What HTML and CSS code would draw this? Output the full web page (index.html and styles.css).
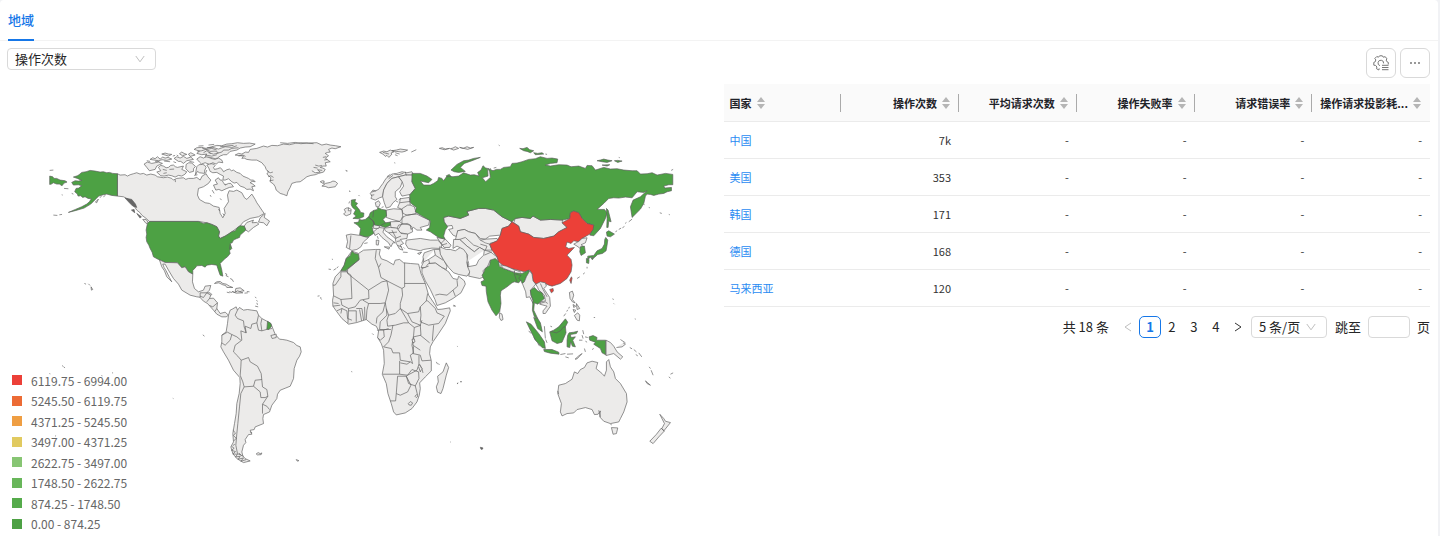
FILE: index.html
```html
<!DOCTYPE html>
<html lang="zh-CN">
<head>
    <meta charset="UTF-8">
    <meta name="viewport" content="width=device-width, initial-scale=1.0">
    <title>地域</title>
    <link rel="stylesheet" href="styles.css">
</head>
<body>
<main class="panel">
    <nav class="tabs">
        <a class="tab active" href="#region">地域</a>
    </nav>

    <div class="content" id="region">
        <section class="chart">
            <div class="select-box metric">
                <select aria-label="指标">
                    <option>操作次数</option>
                </select>
                <svg class="chevron" viewBox="0 0 10 10"><path d="M.8 2 5 7.8 9.2 2"/></svg>
            </div>

            <svg class="map" viewBox="7 70 706 465" role="img" aria-label="世界地图">
                <!-- north america -->
                <g transform="translate(40 130) scale(.33333)">
                    <path d="M232 131 240 135 255 134 262 138 270 134 280 131 290 128 300 132 310 130 320 135 332 132 345 135 352 140 370 143 382 141 395 145 400 150 410 145 430 143 437 148 445 145 460 145 470 142 480 150 486 138 498 131 503 140 512 150 505 160 490 170 475 175 472 195 478 208 495 218 508 220 520 228 537 232 540 250 548 263 555 250 552 235 565 215 562 195 567 182 580 184 590 180 605 188 613 203 620 208 635 192 645 208 650 218 655 225 665 240 672 250 655 260 630 265 610 275 600 287 575 305 555 318 540 325 535 318 538 305 530 290 515 283 500 278 475 274 328 274 318 265 305 255 300 248 290 240 280 225 265 208 250 200 232 198Z"/>
                    <path d="M612 288 620 277 640 270 636 278 650 277 656 282 640 292 625 305 617 300ZM660 263 675 250 672 262 688 273 680 287 670 278 655 276ZM318 268 325 278 318 280 308 268Z"/>
                    <path class="dense" d="M255 204 275 208 286 222 290 232 278 228 268 218ZM274 240 282 238 284 248ZM290 250 304 260 300 264Z"/>
                    <!-- arctic islands -->
                    <path d="M312 102 322 96 335 100 345 98 355 96 367 100 358 104 350 108 345 118 328 122 320 112ZM355 112 362 106 370 108 378 113 385 112 392 106 400 105 406 110 412 112 430 108 425 118 440 125 435 132 425 138 415 136 405 141 395 137 385 135 372 138 362 137 350 126 362 122ZM330 88 338 83 345 86 352 80 360 87 368 81 375 84 384 82 395 87 380 91 366 89 355 92 342 90ZM365 72 375 69 385 72 395 73 385 78 375 75ZM402 85 410 80 420 84 430 79 440 85 452 81 460 88 450 90 440 92 430 100 422 94 415 94ZM445 72 452 68 458 71 465 75 450 79ZM418 71 425 66 432 70 440 73 427 77ZM438 103 446 98 455 99 466 109 460 116 460 124 448 127 437 116Z"/>
                    <path d="M470 87 480 80 490 84 500 79 512 85 524 88 535 84 545 90 548 98 536 96 528 102 518 98 508 103 495 98 484 102 478 96Z"/>
                    <path d="M462 58 470 53 485 52 498 55 515 50 530 46 545 47 560 42 575 41 592 38 610 40 628 39 645 42 636 47 630 50 615 51 600 54 590 60 570 64 560 74 550 74 540 78 532 84 525 86 510 82 495 80 500 72 485 74 470 70 478 63ZM472 64 485 62 497 58 510 64 525 63 535 68M486 54 500 58 515 55 530 60M500 53 518 52 535 57 555 50 575 52 590 47M530 70 545 66 550 60 565 60 575 55 595 53M505 68 520 72 532 70M490 68 500 62 512 70M540 50 560 48 580 46M495 75 515 78 530 74"/>
                    <path class="faint" d="M320 92 330 94M398 78 405 76M410 75 415 78M345 94 358 94M372 93 390 95M400 95 408 98M368 118 380 121M388 118 402 117M370 130 380 128M448 94 462 97M405 148 406 156M462 136 472 134M488 116 494 122M500 120 496 130M516 180 522 190M510 195 513 200M540 205 544 210M552 165 558 162M534 238 540 242M475 48 490 47M505 45 522 43M548 250 552 256"/>
                    <path d="M500 105 508 102 515 101 522 103 525 107 520 112 523 118 532 116 540 113 546 118 550 125 560 119 568 117 574 122 580 120 590 127 600 130 608 138 618 142 625 145 632 150 640 150 645 155 636 154 630 158 638 162 645 168 635 170 640 182 630 177 620 178 612 172 600 168 590 157 582 159 575 155 565 146 555 150 548 150 550 138 540 133 530 127 518 128 510 124 506 114ZM470 110 476 104 488 103 494 106 498 112 494 120 493 130 478 128 472 124 466 134 468 120ZM525 150 535 143 540 150 545 150 550 158 555 165 565 160 572 160 580 170 568 172 558 176 545 182 536 178 527 180 520 165 532 162Z"/>
                    <path class="hi" d="M232 131 218 130 208 127 200 128 190 125 180 126 165 123 150 121 138 125 125 127 117 134 112 137 100 141 112 145 125 151 115 153 105 152 95 157 100 165 115 164 125 167 116 174 108 175 104 185 112 192 114 198 122 197 128 202 135 200 144 205 154 206 148 215 140 222 125 230 106 238 85 247 108 241 132 234 152 222 160 214 168 206 176 198 190 194 200 192 215 196 232 198Z"/>
                    <path class="hi" d="M29 138 38 140 42 145 50 145 60 150 75 152 81 156 72 159 66 167 58 162 50 162 40 158 34 162 29 163Z"/>
                    <path class="hi" d="M328 274H475L490 280 500 278 515 283 530 290 538 305 535 318 540 325 555 318 565 312 575 305 585 302 592 292 600 287 612 288 617 300 608 308 600 315 598 322 588 326 580 330 576 338 570 340 575 355 568 362 570 370 562 380 555 385 540 400 545 420 548 438 540 435 536 424 533 415 530 405 515 403 500 405 495 411 485 406 470 407 465 414 458 420 458 432 445 425 435 410 425 413 412 398 375 397 355 388 340 380 336 366 330 355 326 345 320 335 318 322 320 312 318 300 322 280Z"/>
                    <path d="M358 389 375 397 412 398 425 413 435 410 445 425 458 432 457 455 463 475 475 485 490 480 495 468 512 466 508 480 500 488 510 488 515 493 503 500 495 498 485 502 470 500 450 495 425 480 415 462 400 445 385 420 375 402 368 402 372 412 378 422 388 442 395 455 380 440 373 422 365 410Z"/>
                    <path d="M523 460 530 455 540 454 548 460 558 462 568 468 578 472 560 472 556 466 548 464 536 458ZM587 475 600 473 612 482 604 483 596 486 585 484ZM567 485 576 487M555 430 560 432 558 437 565 440M570 445 576 448 580 455M620 484 628 485M570 342 568 358M145 461 150 466M153 470 158 478 154 480ZM133 460 138 462M40 255 52 256M58 254 66 253M166 216 175 207 170 218ZM180 203 184 198M190 200 196 196M29 121 40 120M65 194 68 195M72 175 85 176M95 190 100 192"/>
                </g>

                <!-- greenland, iceland -->
                <g transform="translate(220 130) scale(.33333)">
                    <path d="M45 75 55 70 65 72 76 66 85 67 90 58 110 55 130 48 142 51 155 46 172 47 190 42 208 44 225 40 240 38 265 39 290 38 305 45 318 42 330 45 346 47 362 50 345 56 335 54 325 58 330 66 322 67 315 70 325 77 316 84 322 90 330 95 315 98 318 108 308 108 300 112 308 114 315 118 310 126 295 130 285 134 272 136 260 140 250 148 240 155 228 156 215 160 210 172 203 185 200 197 190 193 180 190 168 180 165 170 160 162 150 155 152 143 140 132 145 125 138 118 135 110 125 98 110 90 95 90 80 88 72 84 65 85 70 78ZM275 122 285 128 300 126 292 119 306 121M285 105 296 108 305 106M280 112 292 114M140 122 150 128 158 126M144 140 152 137 160 142M148 152 160 150M308 82 318 80M312 90 322 88M180 38 202 40 225 37 242 41 260 39 280 41M55 78 68 75 76 79"/>
                    <path d="M300 155 306 152 312 153 310 158 316 160 330 157 338 153 345 154 352 160 345 170 325 173 315 169 305 168 313 163ZM376 121 380 123M387 183 390 184"/>
                </g>

                <!-- south america -->
                <g transform="translate(200 290) scale(.33333)">
                    <path d="M0 8 20 8 32 15 28 25 40 24 52 38 50 55 60 70 75 66 85 75 78 80 65 80 50 72 40 60 22 40 10 33 0 22ZM20 8 10 22 0 18M28 25 20 35M52 38 38 50 28 46M50 55 44 64"/>
                    <path d="M85 75 90 60 98 56 108 50 112 60 118 52 130 60 142 58 155 60 170 62 175 75 185 85 200 93 212 100 218 115 224 130 218 142 228 136 238 147 248 148 260 150 280 157 290 166 300 170 303 185 298 198 290 210 282 235 280 265 270 288 255 294 240 300 232 312 230 325 215 345 208 365 190 373 188 385 190 400 165 410 162 418 150 420 155 432 145 433 135 448 137 457 130 465 125 485 128 497 135 505 150 512 130 517 110 505 98 490 92 470 100 455 98 430 103 400 108 370 110 340 117 310 120 280 119 262 100 240 85 210 70 185 62 170 65 155 65 135 78 125 82 100Z"/>
                    <path class="border" d="M112 60 105 75 112 85 130 92 132 110 138 128 122 122 125 150 105 165 100 185 113 198 123 210 145 202 150 215 172 228 183 250 185 270 187 290 200 298 203 318 187 342 187 370M138 128 135 108 152 115 155 102 170 98 175 75M170 98 175 120 185 122 202 117 216 115M185 86 182 100 185 122M65 135 82 126 95 133 90 150 75 165 65 158M95 133 110 140 122 150M123 210 122 230 120 255 128 275 132 290 160 288 165 270 185 268M160 288 180 305 182 322 195 322 203 318M187 342 200 348 208 358M132 290 122 310 118 350 113 400 110 430 107 465 112 490 130 498"/>
                    <path class="border" d="M98 420 106 428 100 436 108 444 101 452M94 468 102 474 94 480 106 484 98 491 112 492 106 500 120 498 114 507 130 503 122 513 138 508M104 462 98 466M116 488 124 496"/>
                    <path class="hi" d="M202 93 212 100 214 108 206 118 200 117Z"/>
                    <path d="M168 491 174 487 180 490 185 488 183 493 172 494ZM288 508 296 511 292 513ZM212 136 228 132 228 142 216 145ZM80 6 88 8M96 4 104 7 112 2 120 5 128 8 108 9ZM133 9 143 8M165 20 168 24M169 30 172 34M170 38 172 44M165 48 174 50M8 134 13 138M352 18 358 17M361 25 364 28M150 425 156 428"/>
                </g>

                <!-- europe -->
                <g transform="translate(320 130) scale(.33333)">
                    <path d="M150 190 158 180 166 182 175 178 182 168 188 160 194 150 200 142 208 138 215 132 230 130 245 125 260 128 275 125 280 135 255 135 235 140 215 145 200 160 190 180 187 200 178 203 165 210 152 205 155 198Z"/>
                    <path d="M190 180 200 160 215 145 235 140 246 155 240 172 225 185 225 200 230 208 218 218 210 230 198 234 192 218 187 200Z"/>
                    <path d="M235 140 255 135 278 135 275 155 285 175 270 193 245 198 238 185 250 168 246 155Z"/>
                    <path d="M240 206 267 202 270 225 282 230 288 250 262 256 248 250 245 238 232 232 238 218ZM238 218 270 214M245 236 262 225 270 225M198 240 220 236 245 238 248 262 238 274 215 268 198 262ZM245 262 262 254 290 252 305 260 328 270 325 285 300 292 305 300 290 300 280 292 272 298 270 285 245 280ZM210 275 238 274 245 280 235 296 212 292ZM235 285 262 280 275 290 277 305 262 312 240 308 230 295ZM168 230 165 218 175 212 180 220 176 230ZM184 232 190 230"/>
                    <path d="M78 315 92 312 120 316 145 322 130 335 122 350 110 358 95 361 78 352 82 335ZM92 316 88 356M160 305 175 292 192 294 188 306 200 320 225 338 218 338 212 350 205 338 185 322 175 310 164 316ZM192 350 208 351 206 357ZM168 330 176 331 174 345 168 344ZM171 318 174 326M132 340 142 338"/>
                    <path d="M192 294 210 292 230 294 242 310 262 312 260 325 240 328 250 340 240 345 248 360 238 357 228 340 225 325 205 308 195 302ZM205 308 230 306M225 325 242 318M215 300 228 325M230 334 240 332M232 346 244 350M248 366 262 367M250 352 253 355M262 345 266 350M160 280 178 288 175 295 160 295Z"/>
                    <path d="M258 330 275 328 300 325 330 330 352 330 365 342 362 355 335 354 310 358 300 362 280 358 264 355 256 342ZM292 370 304 366 298 373ZM350 322 375 327 392 345 388 352 372 352 362 340ZM362 340 375 327M365 345 380 340"/>
                    <path d="M72 238 78 234 85 233 93 238 91 252 78 257 70 252 76 246ZM85 233 84 242 92 242"/>
                    <path class="hi" d="M93 210 106 208 104 215 112 220 107 226 118 240 121 247 131 249 130 260 115 266 98 265 108 258 100 252 106 240 97 232 93 224ZM101 278 115 276 117 268 125 270 135 268 145 260 158 272 162 280 156 292 160 310 145 320 134 320 118 314 121 295 112 285ZM145 262 150 248 160 241 172 238 172 232 185 238 197 240 199 258 188 268 196 278 210 276 210 286 195 292 180 287 163 285 158 272Z"/>
                    <path class="border" d="M160 241 158 262M162 285 160 272M180 287 196 278"/>
                    <path d="M178 67 190 63 200 65 210 60 222 65 212 69 215 72 206 82 200 76 195 79 188 72ZM215 62 228 60 240 57 262 60 254 64 245 66 228 64ZM188 67 206 72M225 68 238 72M224 74 232 77M273 66 288 59M357 55 366 53 375 57 388 55 372 59ZM390 56 398 54 405 50 415 55 400 60ZM418 52 428 55 440 50 450 54 460 52 442 58ZM222 98 225 99M78 122 82 123M87 183 90 184M115 195 118 198M88 214 86 220M35 387 38 388M25 417 32 418M40 420 48 415M50 414 54 409M235 210 242 204M228 214 234 216M200 140 210 133M205 146 218 136M222 132 236 134 250 129M255 125 258 136M154 186 168 182M152 196 162 194"/>
                </g>

                <!-- africa, middle east -->
                <g transform="translate(320 240) scale(.33333)">
                    <path d="M95 33 115 40 130 30 165 28 180 28 177 42 183 56 200 62 220 74 225 60 238 58 250 68 270 70 295 72 302 100 315 130 325 165 345 195 352 208 365 207 388 203 390 212 375 250 355 280 338 305 330 320 328 340 333 362 333 392 315 410 298 428 300 445 297 465 290 485 275 505 255 518 228 524 220 515 213 490 203 460 198 430 186 402 192 370 190 330 183 310 172 292 175 272 168 258 155 252 138 238 110 247 85 252 65 235 50 215 38 198 37 180 40 165 38 130 45 110 62 92 72 75 78 55Z"/>
                    <path class="hi" d="M95 33 104 40 115 42 117 58 105 68 92 78 80 88 78 92 62 92 72 75 78 55 90 46Z"/>
                    <path class="border" d="M117 58 105 68 82 88 82 100 145 150 185 125 200 122 182 112 175 82 165 55 168 30M182 70 175 82M200 122 245 145 253 140 253 68M253 130H315M80 92 78 95 62 95 62 110 45 135 38 135M78 95 92 105 95 175 62 178 40 167M145 150 146 175 120 180 105 200 85 205 65 195 62 178M200 122 205 150 195 188 180 190 145 190 128 180M245 145 247 165 240 190 240 205 225 220 205 225 198 205 195 188M240 205 262 220 295 215 300 200 318 182 322 160M240 205 258 235 265 248 250 248 225 255 202 258 200 240 205 225M300 200 302 225 300 245 325 255 355 250 372 228 350 218 345 205 322 182 318 182M145 190 140 210 138 238M195 188 188 215 170 232 168 250M198 205 200 225 180 245 178 268 195 268 212 268M262 220 275 245 300 255 305 240M218 255 212 285 205 305 190 320 213 325 218 338 238 338 240 360 270 365 277 370 270 345 280 338 275 315 280 285 282 262 265 248M300 255 302 285 280 290 278 315 300 330M300 285 328 308M282 262 302 255M340 255 336 302M280 318 278 340 300 345 305 362 332 360M238 362 238 402 188 402M238 402 262 405 290 390 296 372 296 346M270 365 260 372 240 368M296 372 305 385 300 395 295 380M262 405 275 388 295 395 296 415 285 437 265 430 258 408ZM232 408 258 408 272 435 262 455 240 465 228 460 232 408M228 460 226 482 210 482M285 437 292 465M60 195 38 198M40 188 55 190M50 212 65 205 80 212 82 235 95 240M65 205 62 220M85 212 108 212 108 245M85 205 83 250M108 205 125 205 130 240M118 208 124 242M133 200 134 238M170 270 190 270 192 290 180 300 172 292M190 270 205 265"/>
                    <path d="M264 490 270 484 277 488 273 495 266 494ZM284 468 289 463 293 468 288 472ZM275 298 282 296 284 305 278 308ZM298 372 305 385 308 398M378 368 385 382 378 405 368 445 362 460 352 456 348 440 354 425 352 408 368 395Z"/>
                    <path d="M305 80 325 70 345 68 365 82 385 95 398 115 412 118 415 108 432 122 435 132 422 158 398 175 375 188 350 196 344 178 330 148 315 122 305 98Z"/>
                    <path class="border" d="M345 165 358 162 380 165 398 150 412 138 410 120M398 150 405 168M305 85 325 78"/>
                    <path d="M302 82 310 65 308 50 312 38 340 28 358 28 365 50 380 78 378 88 365 82 345 68 325 70 315 82ZM310 65 325 58 345 45 342 30M325 58 328 70M345 45 368 60M304 70 310 55"/>
                    <path d="M358 20 378 28 390 28 405 32 420 22 440 28 440 50 445 70 445 80 450 95 440 108 415 103 400 98 385 82 370 60 360 42Z"/>
                    <path d="M0 172 4 174M398 197 406 198M410 318 412 319M410 430 414 428M420 425 424 424M348 365 352 372M355 370 357 374M93 394 96 395M156 280 160 284"/>
                </g>

                <!-- asia -->
                <g transform="translate(450 140) scale(.33333)">
                    <path d="M-20 232 -5 228 30 235 55 225 50 214 85 205 105 205 130 210 155 230 185 245 175 258 155 265 150 285 118 288 105 297 90 295 75 280 55 275 42 268 22 272 20 290 8 285 -5 268 8 265 5 256 -10 258 -20 248Z"/>
                    <path d="M190 248 195 235 215 232 240 235 248 228 270 240 300 238 337 240 335 248 350 262 325 275 310 288 280 295 250 292 235 282 210 275 205 258Z"/>
                    <path d="M22 272 42 268 55 275 75 280 90 300 105 308 118 312 125 330 102 330 88 322 72 335 50 318 28 298 15 300ZM28 298 45 292 70 315 85 320M90 300 108 297 140 295 145 303 118 310M90 312 110 318 105 330"/>
                    <path d="M10 298 28 298 50 318 72 335 88 322 102 330 120 335 140 350 145 365 120 360 112 378 98 392 102 410 88 415 55 408 58 395 52 380 50 365 52 345 40 328 20 318 8 325ZM50 365 52 380 78 375 85 360 100 345 102 330M102 345 125 335"/>
                    <path class="hi" d="M-115 100-90 100-70 108-55 118-65 128-90 123-80 135-60 135-50 130-38 122-35 112-25 115-20 122-10 108 8 110 25 108 40 98 60 105 72 104 86 108 82 97 92 90 98 77 106 84 112 85 113 108 96 113 106 125 120 112 118 95 113 85 128 92 138 88 150 88 160 82 180 80 185 70 200 69 215 65 235 58 255 56 270 50 290 55 305 54 322 57 320 68 300 70 285 75 300 78 325 74 350 75 362 80 385 78 405 85 410 76 425 77 435 90 460 82 480 87 500 86 520 90 545 92 560 92 570 102 590 101 605 98 620 105 645 100 667 103 667 134 655 134 640 138 643 144 663 142 663 152 650 155 640 160 625 162 610 166 600 163 590 162 585 168 580 190 570 207 545 232 540 200 548 180 570 170 590 152 580 157 560 155 545 173 525 171 505 174 490 173 475 175 460 190 440 208 462 208 470 218 465 235 450 265 430 287 418 285 430 255 410 250 395 235 385 218 370 213 360 218 358 235 337 240 300 238 270 240 248 228 240 235 215 232 195 235 185 245 155 230 130 210 105 205 85 205 50 214 55 225 30 235-5 228-20 232-18 245-8 260-15 270-20 288-16 297-35 292-60 275-72 270-62 262-60 242-90 225-105 215-102 202-120 188-122 165-105 145-115 125Z"/>
                    <path class="hi" d="M2 90 20 73 40 62 55 60 70 55 90 52 65 62 42 70 30 82 45 94 25 97 12 95ZM468 205 473 210 482 245 475 243 473 262 469 262 470 235ZM208 25 218 26 230 22 238 29 250 32 240 38 230 34 220 32ZM250 38 262 40 275 38 280 42 255 44ZM440 62 450 60 460 57 472 60 485 62 470 67 455 65ZM492 62 502 61 515 63 502 67ZM455 75 478 74 470 78ZM-12 107-3 103 2 109-10 110Z"/>
                    <path class="top" d="M185 245 205 258 210 275 235 282 250 292 280 295 310 288 325 275 350 262 335 248 358 235 360 218 370 213 385 218 395 235 410 250 430 255 428 268 418 282 395 295 385 305 370 302 362 310 350 306 346 320 355 325 372 322 355 340 350 345 362 358 365 375 362 395 350 415 330 430 305 438 295 435 280 428 262 435 248 425 245 400 238 390 222 395 195 388 165 382 145 365 140 350 125 330 118 312 140 302 150 285 155 265 175 258Z"/>
                    <path d="M370 312 385 304 395 295 410 293 405 308 392 314 400 320 388 324 380 318Z"/>
                    <path class="hi" d="M390 320 402 318 405 338 392 346 388 335ZM470 288 468 276 475 272 492 282 480 290ZM466 292 472 300 470 315 467 332 456 340 442 343 432 352 420 352 412 357 412 348 430 346 440 332 455 325 462 312 463 298ZM408 355 416 358 415 370 408 368ZM422 354 430 353 426 359Z"/>
                    <path d="M495 275 500 272M505 268 512 264M516 263 522 259M524 250 528 247M535 245 545 237M595 202 598 203M628 218 634 220M655 223 658 224M580 192 582 195M410 380 410 385M398 402 403 398M380 415 388 410M145 15 148 17M285 42 290 43M662 91 668 88M505 52 508 53M118 88 122 85M130 84 138 82"/>
                </g>

                <!-- south asia, oceania -->
                <g transform="translate(450 260) scale(.33333)">
                    <path class="hi" d="M120 0 135-5 145 5 147 18 160 25 190 36 195 38 215 40 235 30 240 40 228 50 222 65 215 70 212 60 205 68 192 65 185 68 170 80 152 92 150 105 152 130 148 155 137 167 125 150 113 125 108 95 107 78 95 76 92 65 102 60 95 45 100 38 105 25 118 15Z"/>
                    <path d="M150 14 168 18 195 30 190 36 160 25ZM148 158 155 162 158 178 152 181 147 172Z"/>
                    <path class="border" d="M192 32 192 42 200 66M195 42 212 46 205 54 212 62M195 30 212 36"/>
                    <path d="M238 32 245 42 248 62 256 72 248 82 240 90 242 105 248 120 248 130 238 110 228 112 226 95 216 70 222 65 228 50ZM256 72 270 65 285 68 288 78 280 85 298 112 300 138 285 160 278 160 278 152 290 138 268 132 270 125 285 122 282 105 264 88 262 82ZM270 70 278 88 290 110M268 130 285 125 292 130"/>
                    <path class="hi" d="M240 90 252 82 262 92 275 98 282 115 270 125 262 132 252 128 250 150 262 175 252 170 246 150 248 120 242 105ZM250 172 262 175 270 188 276 215 262 205ZM228 185 242 192 265 220 282 245 285 265 275 262 255 240 240 210ZM280 268 305 268 325 276 326 282 300 279 282 274ZM298 215 310 210 325 200 345 176 352 186 345 200 347 218 335 246 320 250 305 242ZM352 225 356 218 370 216 382 213 378 220 360 223 362 232 375 230 367 240 375 260 366 258 361 245 358 262 350 260 350 240ZM416 230 428 226 440 232 438 240 466 240 466 284 455 278 450 265 430 252 435 246 418 240Z"/>
                    <path class="border" d="M302 214 318 218 330 212 340 200 346 200"/>
                    <path d="M467 240 480 247 490 258 500 275 517 290 510 297 490 280 467 286ZM498 262 515 260 525 252 518 248M510 238 525 248M538 262 545 266M550 268 558 275M565 278 574 290M556 283 562 287M330 283 345 280M350 282 368 281M374 297 385 287 395 280 380 296ZM345 290 355 293M397 210 400 222M395 225 398 235M386 240 396 240M404 230 412 232M405 243 410 246M282 198 285 235M286 238 290 248M402 265 405 275M425 268 430 265M235 212 242 220M250 232 256 240M262 250 268 258M340 168 346 160M349 154 352 149M355 145 357 140M300 198 305 200"/>
                    <path d="M357 97 366 93 370 105 366 118 374 128 366 125 359 115ZM368 133 376 138 370 142ZM378 130 388 145 380 148ZM368 148 376 150 372 157ZM372 166 382 158 388 165 387 182 380 180ZM486 116 490 118M490 130 492 132M553 176 556 177M430 172 434 172"/>
                    <path d="M325 375 345 370 365 357 372 335 382 340 390 328 402 322 410 308 425 303 442 307 437 325 455 340 462 348 468 330 468 305 475 298 480 320 490 335 495 355 510 370 528 400 530 425 520 455 510 475 505 485 480 490 460 483 448 470 450 452 443 462 432 463 425 448 405 442 380 448 370 458 350 460 335 467 330 455 333 430 322 400ZM483 502 502 503 498 520 488 522ZM480 492 484 494M322 392 325 402M445 450 450 470"/>
                    <path d="M628 462 640 475 645 483 660 487 652 497 640 512 634 505 642 490ZM632 504 642 512 625 530 608 550 598 543 618 522ZM596 320 600 325M602 330 608 345M585 362 600 375 590 370ZM660 342 668 338M655 350 660 354"/>
                    <path class="top" d="M298 88 308 85 309 93 303 98ZM358 60 363 50 365 54 362 70Z"/>
                    <path class="dense" d="M90 561 98 563 96 567 92 567ZM10 135 15 138M20 370 23 370M30 364 34 365M0 545 2 546"/>
                </g>

                <!-- pacific -->
                <g transform="translate(0 360) scale(.33333)">
                    <path d="M186 16 190 19M191 20 195 23"/>
                    <path class="faint" d="M148 40 151 41M304 46 307 47M336 38 339 38M165 228 168 226M518 114 520 115"/>
                </g>
            </svg>

            <ul class="legend">
                <li><i class="swatch c1"></i>6119.75 - 6994.00</li>
                <li><i class="swatch c2"></i>5245.50 - 6119.75</li>
                <li><i class="swatch c3"></i>4371.25 - 5245.50</li>
                <li><i class="swatch c4"></i>3497.00 - 4371.25</li>
                <li><i class="swatch c5"></i>2622.75 - 3497.00</li>
                <li><i class="swatch c6"></i>1748.50 - 2622.75</li>
                <li><i class="swatch c7"></i>874.25 - 1748.50</li>
                <li><i class="swatch c8"></i>0.00 - 874.25</li>
            </ul>
        </section>

        <section class="detail">
            <div class="tools">
                <button type="button" class="tool" aria-label="设置">
                    <svg viewBox="0 0 16 16"><path d="M6.2 13.4 5.9 15l-2.4-1.3.4-1.7-1.3-1.6-1.8-.2V7.4l1.5-.7.5-1.8-1-1.4 2-2 1.7.7L6.6.8h2.8l.8 1.4 1.8-.5 2 1.9-.8 1.5.7 1.6 1.5.8-.2 2M10.6 8.4A2.8 2.8 0 1 0 7 10.7M9 10.3h6.5M9 12.5h6.5M9 14.7h6.5"/></svg>
                </button>
                <button type="button" class="tool" aria-label="更多">
                    <svg viewBox="0 0 16 16"><path class="dots" d="M4 8h0M8 8h0M12 8h0"/></svg>
                </button>
            </div>

            <table class="table">
                <thead>
                    <tr>
                        <th><div class="head"><span>国家</span><svg class="sorter" viewBox="0 0 8 12"><path d="M0 5 4 0 8 5ZM0 7H8L4 12Z"/></svg></div></th>
                        <th><div class="head"><span>操作次数</span><svg class="sorter" viewBox="0 0 8 12"><path d="M0 5 4 0 8 5ZM0 7H8L4 12Z"/></svg></div></th>
                        <th><div class="head"><span>平均请求次数</span><svg class="sorter" viewBox="0 0 8 12"><path d="M0 5 4 0 8 5ZM0 7H8L4 12Z"/></svg></div></th>
                        <th><div class="head"><span>操作失败率</span><svg class="sorter" viewBox="0 0 8 12"><path d="M0 5 4 0 8 5ZM0 7H8L4 12Z"/></svg></div></th>
                        <th><div class="head"><span>请求错误率</span><svg class="sorter" viewBox="0 0 8 12"><path d="M0 5 4 0 8 5ZM0 7H8L4 12Z"/></svg></div></th>
                        <th><div class="head"><span>操作请求投影耗...</span><svg class="sorter" viewBox="0 0 8 12"><path d="M0 5 4 0 8 5ZM0 7H8L4 12Z"/></svg></div></th>
                    </tr>
                </thead>
                <tbody>
                    <tr><td><a href="#cn">中国</a></td><td>7k</td><td>-</td><td>-</td><td>-</td><td>-</td></tr>
                    <tr><td><a href="#us">美国</a></td><td>353</td><td>-</td><td>-</td><td>-</td><td>-</td></tr>
                    <tr><td><a href="#kr">韩国</a></td><td>171</td><td>-</td><td>-</td><td>-</td><td>-</td></tr>
                    <tr><td><a href="#de">德国</a></td><td>168</td><td>-</td><td>-</td><td>-</td><td>-</td></tr>
                    <tr><td><a href="#my">马来西亚</a></td><td>120</td><td>-</td><td>-</td><td>-</td><td>-</td></tr>
                </tbody>
            </table>

            <div class="pagination">
                <span class="total">共 18 条</span>
                <button type="button" class="page prev" aria-label="上一页" disabled><svg viewBox="0 0 10 10"><path d="M8 1 2 5l6 4"/></svg></button>
                <button type="button" class="page current">1</button>
                <button type="button" class="page">2</button>
                <button type="button" class="page">3</button>
                <button type="button" class="page">4</button>
                <button type="button" class="page next" aria-label="下一页"><svg viewBox="0 0 10 10"><path d="M2 1l6 4-6 4"/></svg></button>
                <div class="select-box size">
                    <select aria-label="每页条数">
                        <option>5 条/页</option>
                    </select>
                    <svg class="chevron" viewBox="0 0 10 10"><path d="M.8 2 5 7.8 9.2 2"/></svg>
                </div>
                <label for="jump">跳至</label>
                <input type="text" id="jump">
                <span>页</span>
            </div>
        </section>
    </div>
</main>
</body>
</html>
```
FILE: styles.css
```css
* {
    box-sizing: border-box;
}
body {
    margin: 0;
    background-color: #f1f2f5;
    font-family: "Noto Sans CJK SC", sans-serif;
    font-size: 13px;
    color: #262626;
}
.panel {
    margin-right: 2px;
    min-height: 100vh;
    background-color: #fff;
    border-radius: 4px 4px 0 0;
}
.tabs {
    display: flex;
    height: 41px;
    padding-left: 8px;
    border-bottom: 1px solid #f3f3f3;
}
.tab {
    height: 41px;
    line-height: 40px;
    color: #1677e8;
    font-weight: 500;
    text-decoration: none;
}
.tab.active {
    border-bottom: 2px solid #1677e8;
}
.content {
    display: grid;
    grid-template-columns: 1fr 1fr;
    gap: 10px;
    padding: 7px 8px 0 7px;
}

/* map */
.chart {
    position: relative;
}
.map {
    display: block;
    width: 100%;
}
.map path {
    fill: #ecebea;
    stroke: #5e5e5e;
    stroke-width: 2;
    stroke-linejoin: round;
}
.map path.hi {
    fill: #4da144;
}
.map path.top {
    fill: #ec4038;
}
.map path.dense {
    fill: #666;
}
.map path.border,
.map path.faint {
    fill: none;
}
.legend {
    position: absolute;
    left: 5px;
    top: 322px;
    display: grid;
    grid-auto-rows: 1fr;
    height: 164px;
    margin: 0;
    padding: 0;
    list-style: none;
    font-size: 12px;
    color: #666;
}
.legend li {
    display: flex;
    align-items: center;
    gap: 9px;
}
.swatch {
    width: 10px;
    height: 10px;
}
.c1 { background-color: #ec4038; }
.c2 { background-color: #ec6b35; }
.c3 { background-color: #ef9e43; }
.c4 { background-color: #e1ca60; }
.c5 { background-color: #87c573; }
.c6 { background-color: #68b65a; }
.c7 { background-color: #55ab4b; }
.c8 { background-color: #4da144; }

/* controls */
select,
input,
button {
    font: inherit;
    color: inherit;
}
.select-box {
    position: relative;
    height: 22px;
}
.select-box select {
    appearance: none;
    width: 100%;
    height: 22px;
    padding: 0 7px;
    border: 1px solid #d9d9d9;
    border-radius: 4px;
    background-color: #fff;
    line-height: 20px;
}
.metric {
    width: 149px;
}
.chevron {
    position: absolute;
    top: 6px;
    right: 11px;
    width: 10px;
    height: 10px;
    fill: none;
    stroke: #bfbfbf;
    pointer-events: none;
}
.tools {
    display: flex;
    justify-content: flex-end;
    gap: 4px;
    margin-bottom: 6px;
}
.tool {
    display: flex;
    align-items: center;
    justify-content: center;
    width: 30px;
    height: 30px;
    padding: 0;
    border: 1px solid #d9d9d9;
    border-radius: 6px;
    background-color: #fff;
}
.tool svg {
    width: 16px;
    height: 16px;
    fill: none;
    stroke: #777;
}
.tool .dots {
    stroke-width: 2;
    stroke-linecap: round;
}

/* table */
.table {
    width: 100%;
    table-layout: fixed;
    border-spacing: 0;
    font-size: 11px;
    line-height: 16px;
    color: #333;
}
.table th {
    position: relative;
    height: 38px;
    padding: 0 9px 0 6px;
    border-bottom: 1px solid #ebebeb;
    background-color: #fafafa;
    color: #1f2329;
    font-weight: 700;
    white-space: nowrap;
}
.table th:not(:last-child)::after {
    content: "";
    position: absolute;
    top: 10px;
    right: 0;
    width: 1px;
    height: 18px;
    background-color: #aaa;
}
.head {
    display: flex;
    align-items: center;
    justify-content: flex-end;
    gap: 5px;
}
th:first-child .head {
    justify-content: flex-start;
}
.sorter {
    flex: none;
    width: 8px;
    height: 12px;
}
.sorter path {
    fill: #b5b5b5;
}
.table td {
    height: 37px;
    padding: 0 8px 1px 6px;
    border-bottom: 1px solid #ebebeb;
    text-align: right;
}
.table td:first-child {
    text-align: left;
}
.table a {
    color: #2a8bf2;
    text-decoration: none;
}

/* pagination */
.pagination {
    display: flex;
    align-items: center;
    justify-content: flex-end;
    height: 22px;
    margin-top: 9px;
    line-height: 22px;
}
.total {
    margin-right: 8px;
}
.page {
    width: 22px;
    height: 22px;
    padding: 0;
    border: 1px solid transparent;
    border-radius: 5px;
    background-color: transparent;
    line-height: 20px;
}
.page svg {
    width: 10px;
    height: 10px;
    fill: none;
    stroke: #333;
}
.page.prev svg {
    stroke: #bfbfbf;
}
.page.current {
    border-color: #1677e8;
    color: #1677e8;
    font-weight: 600;
}
.size {
    width: 76px;
    margin: 0 8px 0 2px;
}
#jump {
    width: 42px;
    height: 22px;
    margin: 0 7px;
    padding: 0 6px;
    border: 1px solid #d9d9d9;
    border-radius: 4px;
}
```
